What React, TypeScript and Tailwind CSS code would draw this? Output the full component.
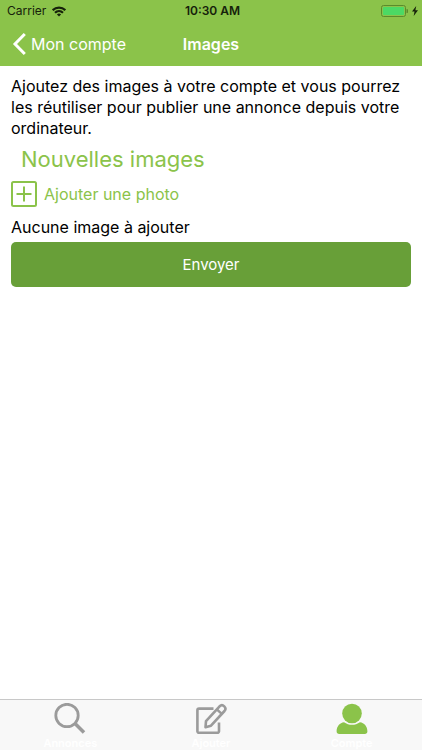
import React from "react";

function StatusBar() {
  return (
    <div className="grid h-[22px] grid-cols-3 items-center pl-[7px] pr-1 leading-4 text-[#16210a]">
      <div className="flex items-center gap-1.5">
        <span className="text-[12px]">Carrier</span>
        <svg className="h-[11px] w-[14px]" viewBox="0 0 14 11" fill="none" stroke="currentColor" strokeWidth="2.2">
          <path d="M0.7 4.100a9 9 0 0 1 12.600 0" />
          <path d="M3 6.700a5.800 5.800 0 0 1 8 0" />
          <path d="M7 10.600 4.900 8.500a3 3 0 0 1 4.200 0Z" fill="currentColor" stroke="none" />
        </svg>
      </div>
      <span className="text-center text-[12px] font-semibold">10:30 AM</span>
      <div className="flex items-center justify-end gap-1">
        <svg className="h-3 w-[27px]" viewBox="0 0 27 12">
          <rect x="0.5" y="0.5" width="24" height="11" rx="2" fill="none" stroke="#5b8b2c" />
          <rect x="2" y="2" width="21" height="8" rx="1" fill="#4cd964" />
          <path d="M25.500 4v4a2 2 0 0 0 0-4Z" fill="#5b8b2c" />
        </svg>
        <svg className="h-[10px] w-[6px]" viewBox="0 0 6 10" fill="currentColor">
          <path d="M4.200 0 0 5.600h2.500L1.700 10 6 4.200H3.400Z" />
        </svg>
      </div>
    </div>
  );
}

function NavBar() {
  return (
    <div className="grid h-11 grid-cols-3 items-center text-white">
      <button type="button" className="flex items-center gap-1 whitespace-nowrap pl-3 text-base">
        <svg className="h-6 w-[15px] shrink-0" viewBox="0 0 15 24" fill="none" stroke="currentColor" strokeWidth="3">
          <path d="M12.800 2 3 12l9.800 10" />
        </svg>
        Mon compte
      </button>
      <h1 className="text-center text-base font-semibold">Images</h1>
    </div>
  );
}

function SearchIcon() {
  return (
    <svg className="size-8" viewBox="0 0 32 32" fill="none" stroke="#9b9b9b">
      <circle cx="13" cy="12.500" r="11.200" strokeWidth="2.800" />
      <path d="m21 20.500 9 9" strokeWidth="3.600" />
    </svg>
  );
}

function ComposeIcon() {
  return (
    <svg className="size-8" viewBox="0 0 32 32" fill="none" stroke="#9b9b9b" strokeWidth="2.600" strokeLinejoin="round">
      <path d="M18.500 5.600H4a1.600 1.600 0 0 0-1.600 1.600v21A1.600 1.600 0 0 0 4 29.800h18.400a1.600 1.600 0 0 0 1.600-1.600V19.500" />
      <path d="M11 18.200 24.600 3.300a3.400 3.400 0 0 1 4.900 4.700L16 22.700l-5.500 1.500Z" />
      <path d="m21.800 6.400 5 4.500" />
    </svg>
  );
}

function PersonIcon() {
  return (
    <svg className="size-8" viewBox="0 0 32 32" fill="#8bc34a">
      <circle cx="16" cy="10.500" r="9.800" />
      <path d="M8 19.300c4.900 3.400 11.100 3.400 16 0 4.100.4 7.400 4.200 7.400 8.900 0 1.800-1 2.800-2.600 2.800H3.200C1.600 31 .6 30 .6 28.200c0-4.700 3.300-8.500 7.400-8.900Z" />
    </svg>
  );
}

const tabs = [
  { label: "Annonces", icon: <SearchIcon /> },
  { label: "Ajouter", icon: <ComposeIcon /> },
  { label: "Compte", icon: <PersonIcon /> },
];

export default function App() {
  return (
    <div className="flex min-h-screen flex-col bg-white font-[Inter,'Liberation_Sans',sans-serif] text-black">
      <header className="bg-[#8bc34a]">
        <StatusBar />
        <NavBar />
      </header>
      <main className="grow px-[11px] pt-[10px] text-base leading-[21px]">
        <p>Ajoutez des images à votre compte et vous pourrez les réutiliser pour publier une annonce depuis votre ordinateur.</p>
        <h2 className="mt-1 pl-2.5 text-[22px] leading-8 text-[#8bc34a]">Nouvelles images</h2>
        <button type="button" className="mt-1.5 flex items-center gap-[7px] text-[#8bc34a]">
          <svg className="size-[26px]" viewBox="0 0 26 26" fill="none" stroke="currentColor" strokeWidth="2">
            <rect x="1" y="1" width="24" height="24" rx="1.500" />
            <path d="M5.500 13h15M13 5.500v15" />
          </svg>
          Ajouter une photo
        </button>
        <p className="mt-2.5">Aucune image à ajouter</p>
        <button type="button" className="mt-1 h-[45px] w-full rounded-[5px] bg-[#689f38] text-[15px] text-white">
          Envoyer
        </button>
      </main>
      <nav className="grid h-[51px] grid-cols-3 border-t border-[#c8c8c8] bg-[#f8f8f8]">
        {tabs.map((tab) => (
          <button key={tab.label} type="button" className="flex flex-col items-center pt-[3px] text-[11px] font-semibold leading-4 text-white">
            {tab.icon}
            {tab.label}
          </button>
        ))}
      </nav>
    </div>
  );
}
